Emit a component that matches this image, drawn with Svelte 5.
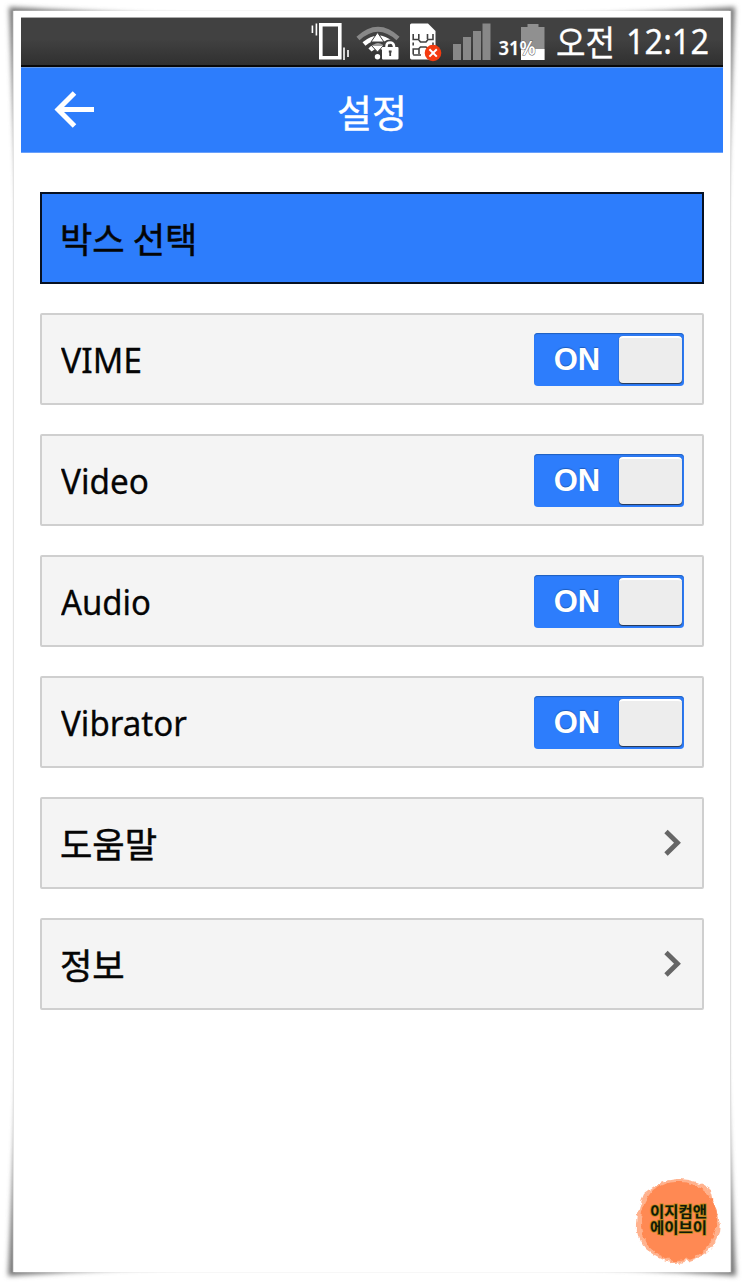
<script>
  const toggles = [
    { name: 'VIME', width: 81 },
    { name: 'Video', width: 88 },
    { name: 'Audio', width: 90 },
    { name: 'Vibrator', width: 126 }
  ];
  const links = ['도움말', '정보'];
</script>

<div class="page">
  <svg class="shadow" width="743" height="1284" viewBox="0 0 743 1284" aria-hidden="true">
    <defs>
      <filter id="soft" x="-5%" y="-5%" width="110%" height="110%"><feGaussianBlur stdDeviation="2.4" /></filter>
    </defs>
    <path d="M9 7 Q80 11 200 17 H540 Q670 11 735 7 Q731 100 724 280 V1000 Q731 1180 736 1276 Q670 1271 540 1265 H200 Q80 1271 8 1276 Q13 1180 20 1000 V280 Q13 100 9 7Z" fill="#777" filter="url(#soft)" />
  </svg>
  <main class="card">
    <div class="status">
      <svg class="status-icons" width="236" height="48" viewBox="310 18 236 48" aria-hidden="true">
        <g fill="none" stroke="#fff">
          <path stroke-width="3.6" d="M320.8 24.8H339.8V57.8H320.8Z" />
          <path stroke-width="1.6" d="M312.4 25.5V33M316.4 23.5V35.5M344 47.5V60M348 50V57" />
        </g>
        <path d="M358 38.5Q378 20 398 38.5" fill="none" stroke="#888" stroke-width="4.6" />
        <path d="M364 44Q378 32 391 43M370 50Q378 42 386 50" fill="none" stroke="#fff" stroke-width="4.5" />
        <path d="M377.5 32.5L384 42H371Z M371 45H384L377.5 52Z" fill="#fff" stroke="#414141" stroke-width="1" />
        <circle cx="377.5" cy="56.7" r="2.7" fill="#fff" />
        <path d="M385.5 48V46Q385.5 42 390 42T394.5 46V48" stroke="#414141" stroke-width="5" fill="none" />
        <path d="M386.5 48V46Q386.5 42.5 390 42.5T394 46V48" stroke="#fff" stroke-width="2.5" fill="none" />
        <rect x="382" y="47" width="16.5" height="12.5" rx="1" fill="#fff" />
        <path d="M390.2 50.5V56M388.8 51.5H391.6" stroke="#414141" stroke-width="1.8" />
        <path d="M411.5 23.5H428L435.5 31V57.5Q435.5 59.5 433.5 59.5H411.5Q410 59.5 410 57.5V25Q410 23.5 411.5 23.5Z" fill="#fff" />
        <path d="M413.2 34V39.5H418.5L420.5 42H426L428 39.5H433V34M418.8 34V39M427.5 34V39M413.2 42.5V45.5M433 42.5V45.5M413.2 54.5V49H418.5L420.5 47H426L428 49H432M419 49V54M413.2 55H421" fill="none" stroke="#414141" stroke-width="1.6" />
        <circle cx="433" cy="53" r="8.3" fill="#f43b10" />
        <path d="M429.4 49.2L436.8 56.6M436.8 49.2L429.4 56.6" stroke="#fff" stroke-width="2" />
        <path d="M453 44H461V60H453ZM463 37H471V60H463ZM473 31H481V60H473ZM482.5 23.5H490.5V60H482.5Z" fill="#888" />
        <path d="M527.5 24H538.5V27H544.5V60H521V27H527.5Z" fill="#909090" />
        <path d="M521 49H544.5V60H521Z" fill="#fff" />
        <text class="percent" x="498.5" y="54.5" textLength="37" lengthAdjust="spacingAndGlyphs">31%</text>
      </svg>
      <svg class="time" width="156" height="46" viewBox="0 0 156 46">
        <text x="0" y="36.5" textLength="59" lengthAdjust="spacingAndGlyphs">오전</text>
        <text x="70" y="35" textLength="83" lengthAdjust="spacingAndGlyphs">12:12</text>
      </svg>
    </div>
    <header>
      <svg class="back" width="42" height="40" viewBox="54 90 42 40" role="img" aria-label="뒤로">
        <path d="M94 109.5H58M74.5 93L58 109.5L74.5 126" fill="none" stroke="#fff" stroke-width="5" />
      </svg>
      <h1>설정</h1>
    </header>
    <section class="list">
      <div class="item selected"><span class="ko">박스 선택</span></div>
      {#each toggles as { name, width }}
        <div class="item">
          <svg class="label" width="160" height="46" viewBox="0 0 160 46">
            <text x="0" y="36.5" textLength={width} lengthAdjust="spacingAndGlyphs">{name}</text>
          </svg>
          <div class="switch"><b>ON</b><i></i></div>
        </div>
      {/each}
      {#each links as name}
        <div class="item">
          <span class="ko">{name}</span>
          <svg class="chevron" width="20" height="28" viewBox="0 0 20 28" aria-hidden="true">
            <path d="M3 2.5L14.5 13.7L3 25" fill="none" stroke="#666" stroke-width="4.8" />
          </svg>
        </div>
      {/each}
    </section>
    <div class="stamp">
      <svg width="90" height="90" viewBox="633 1176 90 90">
        <defs>
          <filter id="brush" x="-10%" y="-10%" width="120%" height="120%">
            <feTurbulence type="fractalNoise" baseFrequency=".18" numOctaves="2" seed="4" result="noise" />
            <feDisplacementMap in="SourceGraphic" in2="noise" scale="6" xChannelSelector="R" yChannelSelector="G" />
            <feGaussianBlur stdDeviation=".6" />
          </filter>
        </defs>
        <g filter="url(#brush)">
          <path d="M680 1179Q697 1180 710 1189L713 1203Q722 1216 719 1232Q714 1248 703 1255Q688 1264 672 1263Q656 1258 646 1249Q635 1238 637 1223Q638 1206 644 1194Q660 1179 680 1179Z" fill="#ff8952" fill-opacity=".65" />
          <path d="M680 1182Q694 1182 704 1191Q718 1203 717 1221Q716 1238 703 1252Q689 1262 673 1261Q657 1255 649 1247Q640 1235 641 1218Q642 1202 653 1190Q665 1181 680 1182Z" fill="#ff8952" />
        </g>
        <g class="stamp-text">
          <text x="650" y="1216.5" textLength="57" lengthAdjust="spacingAndGlyphs">이지컴앤</text>
          <text x="650" y="1232.5" textLength="57" lengthAdjust="spacingAndGlyphs">에이브이</text>
        </g>
      </svg>
    </div>
  </main>
</div>

<style>
  :global(body) { background: #fff; }
  .page {
    position: relative;
    box-sizing: border-box;
    width: 743px;
    height: 1284px;
    padding: 11px 13px 12px 14px;
    overflow: hidden;
    font-family: "Noto Sans", "Noto Sans CJK KR", sans-serif;
  }
  .shadow { position: absolute; inset: 0; }
  .card {
    position: relative;
    box-sizing: border-box;
    width: 716px;
    height: 1261px;
    padding: 6px 7px 0;
    background: #fff;
    box-shadow: -1px 0 1px #e4e4e4, 1px 0 1px #e0e0e0;
    display: flex;
    flex-direction: column;
  }
  .status {
    box-sizing: border-box;
    height: 50px;
    flex: none;
    display: flex;
    justify-content: flex-end;
    align-items: flex-start;
    gap: 10px;
    padding: 1px 11px 0 0;
    background: linear-gradient(#414141 45%, #303030);
    border-top: 1px solid #aaa;
    border-bottom: 2px solid #080808;
  }
  .status-icons { margin-top: -1px; }
  .percent { font: 600 19px "Noto Sans", sans-serif; fill: #fff; stroke: #666; stroke-width: 1; paint-order: stroke; }
  .time { overflow: visible; font: 35px "Noto Sans", "Noto Sans CJK KR", sans-serif; fill: #fff; stroke: #fff; stroke-width: .3; }
  header {
    box-sizing: border-box;
    flex: none;
    height: 86px;
    display: grid;
    grid-template-columns: 76px 1fr 76px;
    align-items: center;
    background: #2d7dfc;
    border-top: 1px solid #6998df;
    border-bottom: 1px solid #69a0fb;
    color: #fff;
  }
  .back { margin-left: 33px; }
  h1 { margin: 2px 0 0; text-align: center; font: 400 38px/52px "Noto Sans CJK KR", sans-serif; -webkit-text-stroke: .4px #fff; }
  .list { display: grid; grid-auto-rows: 92px; row-gap: 29px; padding: 39px 19px 0; }
  .item {
    box-sizing: border-box;
    width: 664px;
    display: flex;
    align-items: center;
    justify-content: space-between;
    padding: 0 18px;
    background: #f4f4f4;
    border: 2px solid #cfcfcf;
    border-radius: 2px;
    color: #050505;
    font-size: 34px;
    line-height: 46px;
  }
  .label { fill: #050505; stroke: #050505; stroke-width: .3; margin-left: 1px; }
  .item .ko { font-family: "Noto Sans CJK KR", sans-serif; font-size: 35.2px; -webkit-text-stroke: .5px #050505; }
  .selected { background: #2d7dfc; border-color: #071122; border-radius: 0; }
  .switch {
    box-sizing: border-box;
    width: 150px;
    height: 53px;
    display: flex;
    align-items: center;
    padding: 0 2px;
    background: #2d7dfc;
    border-radius: 4px;
    box-shadow: inset 0 1px 1px #2060bd;
  }
  .switch b { width: 83px; padding: 2px 1px 0 0; box-sizing: border-box; text-align: center; color: #fff; font: bold 31px/36px "Liberation Sans", sans-serif; text-shadow: 0 -1px 1px #1e5dbd; }
  .switch i {
    box-sizing: border-box;
    width: 63px;
    height: 47px;
    background: #ededed;
    border-radius: 4px;
    border-top: 2px solid #fff;
    box-shadow: 0 1px 1px #26364f, 0 0 1px #36557f;
  }
  .chevron { margin-right: 1px; }
  .stamp { margin-top: auto; margin-bottom: 6px; align-self: flex-end; height: 90px; }
  .stamp-text { font: 700 14.5px "Noto Sans CJK KR", sans-serif; fill: #101a0b; paint-order: stroke; stroke: #b98712; stroke-width: 1.5; }
</style>
